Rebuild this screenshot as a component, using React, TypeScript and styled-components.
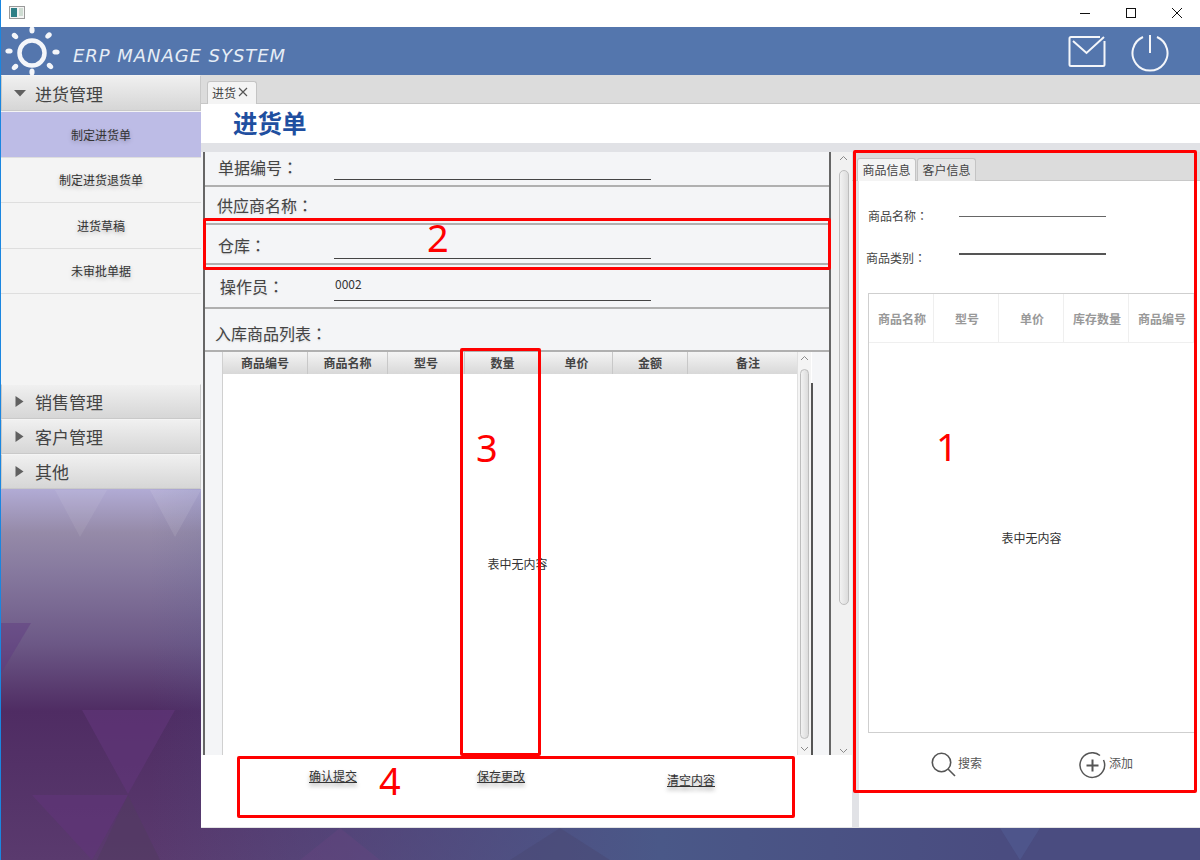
import React from "react";
import styled, { createGlobalStyle } from "styled-components";

const GlobalStyle = createGlobalStyle`
  html, body {
    margin: 0;
    padding: 0;
    background: #fff;
  }
  body {
    font-family: "Noto Sans CJK SC", "Liberation Sans", sans-serif;
    color: #333;
  }
`;

const Window = styled.div`
  position: relative;
  width: 1200px;
  height: 860px;
  box-sizing: border-box;
  border-left: 1px solid #1a86e0;
  overflow: hidden;
  display: flex;
  flex-direction: column;
`;

const Backdrop = styled.svg`
  position: absolute;
  left: -1px;
  top: 0;
  z-index: 0;
`;

const TitleBar = styled.div`
  position: relative;
  z-index: 1;
  height: 27px;
  box-sizing: border-box;
  padding: 0 17px 2px 8px;
  background: #fff;
  display: flex;
  align-items: center;
  justify-content: space-between;
`;

const WindowButtons = styled.div`
  display: flex;
  align-items: center;
  gap: 34px;
`;

const Header = styled.header`
  position: relative;
  z-index: 1;
  height: 48px;
  background: #5476ad;
  display: flex;
  align-items: center;
`;

const Logo = styled.svg`
  flex: none;
`;

const Brand = styled.div`
  margin-left: 7px;
  margin-top: 8px;
  font-family: "DejaVu Sans", sans-serif;
  font-style: italic;
  font-size: 18px;
  letter-spacing: 0.95px;
  color: #e6edf6;
  white-space: nowrap;
`;

const HeaderIcons = styled.div`
  margin-left: auto;
  margin-right: 30px;
  display: flex;
  align-items: center;
  gap: 24px;
`;

const Main = styled.div`
  position: relative;
  z-index: 1;
  flex: 1;
  display: flex;
  align-items: flex-start;
`;

const Sidebar = styled.nav`
  width: 200px;
  flex: none;
  display: flex;
  flex-direction: column;
`;

const PaneHead = styled.div<{ $tall?: boolean }>`
  height: ${(p) => (p.$tall ? 36 : 35)}px;
  box-sizing: border-box;
  background: linear-gradient(#f0f0f0, #d6d6d6);
  border: 1px solid #c9c9c9;
  border-top-color: #f4f4f4;
  display: flex;
  align-items: center;
  gap: 8px;
  padding-left: 12px;
  font-size: 17px;
  color: #444;
`;

const PaneBody = styled.div`
  height: 273px;
  box-sizing: border-box;
  padding-top: 1px;
  background: #f4f4f4;
`;

const NavItem = styled.div<{ $active?: boolean }>`
  height: 45.5px;
  box-sizing: border-box;
  display: flex;
  align-items: center;
  justify-content: center;
  font-size: 12px;
  color: #333;
  text-shadow: 0 2px 4px rgba(0, 0, 0, 0.25);
  background: ${(p) => (p.$active ? "#bdbce6" : "#f4f4f4")};
  border-bottom: 1px solid #dedede;
`;

const Content = styled.section`
  width: 999px;
  height: 753px;
  flex: none;
  background: #fff;
  display: flex;
  flex-direction: column;
  border-bottom: 1px solid #e4e4e4;
  box-sizing: border-box;
`;

const TabStrip = styled.div<{ $inset: number; $height: number }>`
  height: ${(p) => p.$height}px;
  box-sizing: border-box;
  background: #dcdcdc;
  border-bottom: 1px solid #c8c8c8;
  padding-left: ${(p) => p.$inset}px;
  display: flex;
  align-items: flex-end;
  gap: 1px;
  flex: none;
`;

const Tab = styled.div<{ $active?: boolean; $width: number }>`
  width: ${(p) => p.$width}px;
  height: 23px;
  box-sizing: border-box;
  margin-bottom: -1px;
  padding-bottom: 2px;
  background: ${(p) => (p.$active ? "#f4f4f4" : "#e6e6e6")};
  border: 1px solid #c4c4c4;
  border-bottom: none;
  border-radius: 3px 3px 0 0;
  display: flex;
  align-items: center;
  justify-content: center;
  gap: 2px;
  font-size: 12px;
  color: #444;
`;

const ClosableTab = styled(Tab)`
  justify-content: flex-start;
  padding-left: 4px;
`;

const PageTitle = styled.h1`
  margin: 0;
  height: 39px;
  flex: none;
  box-sizing: border-box;
  padding-left: 32px;
  font-size: 24.5px;
  line-height: 38px;
  font-weight: 700;
  color: #1f4fa0;
`;

const Divider = styled.div`
  height: 9px;
  flex: none;
  background: #e1e2e6;
`;

const Work = styled.div`
  flex: 1;
  display: flex;
  min-height: 0;
`;

const LeftPane = styled.div`
  width: 651px;
  flex: none;
  display: flex;
  flex-direction: column;
`;

const FormFrame = styled.div`
  height: 603px;
  flex: none;
  display: flex;
  background: #f4f5f7;
  padding-left: 2px;
`;

const Form = styled.div`
  width: 624px;
  flex: none;
  border-left: 2px solid #666;
  border-right: 2px solid #666;
  display: flex;
  flex-direction: column;
`;

const FormRow = styled.div<{ $height: number; $pad: number; $indent: number }>`
  height: ${(p) => p.$height}px;
  box-sizing: border-box;
  flex: none;
  display: flex;
  align-items: flex-end;
  padding-bottom: ${(p) => p.$pad}px;
  padding-left: ${(p) => p.$indent}px;
  border-bottom: 2px solid #b0b0b0;
`;

const FormLabel = styled.div<{ $width?: number; $lift?: number }>`
  width: ${(p) => (p.$width ? `${p.$width}px` : "auto")};
  flex: none;
  margin-bottom: ${(p) => p.$lift ?? 0}px;
  font-size: 16px;
  line-height: 24px;
  color: #444;
  text-shadow: 0 1px 2px rgba(0, 0, 0, 0.12);
`;

const Colon = styled.span`
  font-family: "Noto Sans CJK TC", sans-serif;
`;

const FormField = styled.div`
  width: 317px;
  height: 28px;
  flex: none;
  box-sizing: border-box;
  padding: 3px 0 0 1px;
  border-bottom: 1px solid #444;
  font-size: 12px;
  line-height: 16px;
  color: #333;
`;

const TableWrap = styled.div`
  flex: 1;
  display: flex;
  padding-left: 17px;
  min-height: 0;
`;

const GridTable = styled.div`
  position: relative;
  width: 590px;
  flex: none;
  background: #fff;
  border-left: 1px solid #d0d0d0;
  box-sizing: border-box;
  display: flex;
  flex-direction: column;
`;

const HeadRow = styled.div`
  display: flex;
  height: 22px;
  flex: none;
  box-sizing: border-box;
`;

const HeadCell = styled.div<{ $width: number }>`
  width: ${(p) => p.$width}px;
  flex: none;
  box-sizing: border-box;
  background: linear-gradient(#f4f4f4, #d8d8d8);
  border-right: 1px solid #c8c8c8;
  display: flex;
  align-items: center;
  justify-content: center;
  padding-bottom: 2px;
  font-size: 12px;
  font-weight: 700;
  color: #444;
`;

const EmptyBody = styled.div<{ $lift?: number }>`
  flex: 1;
  display: flex;
  align-items: center;
  justify-content: center;
  padding-bottom: ${(p) => p.$lift ?? 0}px;
  font-size: 12px;
  color: #333;
`;

const InnerScroll = styled.div`
  position: absolute;
  right: 1px;
  top: 0;
  bottom: 0;
  width: 14px;
  background: #f4f4f4;
  border-left: 1px solid #e0e0e0;
  box-sizing: border-box;
  display: flex;
  flex-direction: column;
  align-items: center;
  justify-content: space-between;
  padding: 3px 0;
`;

const Thumb = styled.div<{ $height: number }>`
  width: 9px;
  height: ${(p) => p.$height}px;
  box-sizing: border-box;
  background: linear-gradient(90deg, #f2f2f2, #dcdcdc);
  border: 1px solid #bdbdbd;
  border-radius: 5px;
`;

const InnerEdge = styled.div`
  position: absolute;
  right: -1px;
  top: 31px;
  bottom: 0;
  width: 2px;
  background: #555;
`;

const OuterScroll = styled.div`
  width: 21px;
  flex: none;
  box-sizing: border-box;
  background: #f1f1f1;
  padding: 3px 3px 1px 7px;
  display: flex;
  flex-direction: column;
  align-items: center;
  justify-content: flex-start;
`;

const OuterThumb = styled(Thumb)`
  margin: 9px 0 auto;
  width: 10px;
`;

const ActionBar = styled.div`
  flex: 1;
  display: grid;
  grid-template-columns: 168px 190px auto;
  align-items: start;
  justify-content: start;
  padding: 13px 0 0 108px;
`;

const LinkButton = styled.div<{ $drop?: number }>`
  margin-top: ${(p) => p.$drop ?? 0}px;
  width: max-content;
  font-size: 12px;
  line-height: 16px;
  color: #333;
  text-decoration: underline;
  text-shadow: 0 3px 4px rgba(0, 0, 0, 0.35);
`;

const RightPane = styled.div`
  flex: 1;
  min-width: 0;
  display: flex;
  flex-direction: column;
`;

const RightBody = styled.div`
  flex: 1;
  margin-left: 7px;
  padding-right: 5px;
  background: #fff;
  position: relative;
  box-sizing: border-box;
  display: flex;
  flex-direction: column;
`;

const RightGutter = styled.div`
  flex: 1;
  display: flex;
  background: #e1e2e6;
  min-height: 0;
`;

const InfoRow = styled.div<{ $top: number; $indent: number }>`
  display: flex;
  align-items: flex-end;
  margin-top: ${(p) => p.$top}px;
  padding-left: ${(p) => p.$indent}px;
`;

const InfoLabel = styled.div<{ $width: number }>`
  width: ${(p) => p.$width}px;
  flex: none;
  font-size: 12px;
  line-height: 16px;
  color: #444;
`;

const InfoLine = styled.div<{ $raise: number; $thick?: boolean }>`
  width: 147px;
  height: ${(p) => (p.$thick ? 2 : 1)}px;
  margin-bottom: ${(p) => p.$raise}px;
  background: ${(p) => (p.$thick ? "#555" : "#666")};
`;

const ProductTable = styled.div`
  margin: 27px 0 0 9px;
  height: 440px;
  flex: none;
  box-sizing: border-box;
  border: 1px solid #cfcfcf;
  display: flex;
  flex-direction: column;
`;

const ProductHead = styled.div`
  display: flex;
  height: 49px;
  flex: none;
  box-sizing: border-box;
  border-bottom: 1px solid #efefef;
`;

const ProductCell = styled.div`
  width: 65px;
  flex: none;
  box-sizing: border-box;
  padding-left: 2px;
  border-right: 1px solid #efefef;
  display: flex;
  align-items: center;
  justify-content: center;
  font-size: 12px;
  font-weight: 700;
  color: #999;
`;

const ToolRow = styled.div`
  display: flex;
  align-items: flex-start;
  padding: 19px 0 0 72px;
`;

const Tool = styled.div<{ $width: number; $gap: number }>`
  width: ${(p) => p.$width}px;
  display: flex;
  align-items: flex-start;
  gap: ${(p) => p.$gap}px;
  font-size: 12px;
  line-height: 22px;
  color: #555;
`;

const Marker = styled.div<{ $x: number; $y: number; $w: number; $h: number }>`
  position: absolute;
  left: ${(p) => p.$x - 1}px;
  top: ${(p) => p.$y}px;
  width: ${(p) => p.$w}px;
  height: ${(p) => p.$h}px;
  box-sizing: border-box;
  border: 3px solid #ff0000;
  border-radius: 2px;
  z-index: 2;
  pointer-events: none;
`;

const MarkerNumber = styled.span<{ $x: number; $y: number }>`
  position: absolute;
  left: ${(p) => p.$x - 1}px;
  top: ${(p) => p.$y}px;
  z-index: 2;
  font-family: "Noto Sans", sans-serif;
  font-size: 38px;
  line-height: 44px;
  color: #ff0000;
`;

const Chevron = ({ up }: { up?: boolean }) => (
  <svg width="9" height="6" viewBox="0 0 9 6">
    <path d={up ? "M1 5 L4.5 1.5 L8 5" : "M1 1 L4.5 4.5 L8 1"} fill="none" stroke="#8a8a8a" strokeWidth="1" />
  </svg>
);

const Arrow = ({ open }: { open?: boolean }) => (
  <svg width="13" height="13" viewBox="0 0 13 13">
    <path d={open ? "M0 3 H12 L6 9.5 Z" : "M1.5 1 L9.5 6.5 L1.5 12 Z"} fill="#606060" />
  </svg>
);

// sun rays: x, y, rotation
const rays = [
  [32, 30, 0],
  [48.5, 35.5, 45],
  [56, 52, 90],
  [50, 66, 135],
  [32, 72, 0],
  [15, 67, 45],
  [9, 51, 90],
  [15, 36, 135],
];

const BackdropArt = () => (
  <Backdrop width="1200" height="860" viewBox="0 0 1200 860">
    <defs>
      <linearGradient id="bgV" x1="0" y1="488" x2="0" y2="860" gradientUnits="userSpaceOnUse">
        <stop offset="0" stopColor="#b2acd6" />
        <stop offset="0.12" stopColor="#958aa8" />
        <stop offset="0.22" stopColor="#877a9f" />
        <stop offset="0.42" stopColor="#6c5886" />
        <stop offset="0.6" stopColor="#4f2c63" />
        <stop offset="1" stopColor="#5a3a6e" />
      </linearGradient>
      <linearGradient id="bgH" x1="150" y1="0" x2="1000" y2="0" gradientUnits="userSpaceOnUse">
        <stop offset="0" stopColor="#4c5a90" stopOpacity="0" />
        <stop offset="0.6" stopColor="#4a5888" stopOpacity="1" />
        <stop offset="1" stopColor="#4a4c80" stopOpacity="1" />
      </linearGradient>
    </defs>
    <rect width="1200" height="860" fill="url(#bgV)" />
    <rect width="1200" height="860" fill="url(#bgH)" />
    <polygon points="55,490 107,490 80,537" fill="#ffffff" opacity="0.07" />
    <polygon points="150,490 201,490 175,537" fill="#ffffff" opacity="0.09" />
    <polygon points="0,623 31,623 0,675" fill="#603a80" opacity="0.45" />
    <polygon points="82,710 175,710 128,794" fill="#5f3578" opacity="0.7" />
    <polygon points="32,795 128,795 92,860" fill="#5f3578" opacity="0.7" />
    <polygon points="128,795 97,860 160,860" fill="#523a62" opacity="0.7" />
    <polygon points="300,860 340,828 380,860" fill="#6a4580" opacity="0.35" />
    <polygon points="560,828 610,860 510,860" fill="#4a4870" opacity="0.45" />
    <polygon points="1000,828 1040,828 1020,860" fill="#55649a" opacity="0.4" />
  </Backdrop>
);

const listColumns: [string, number][] = [
  ["商品编号", 85],
  ["商品名称", 80],
  ["型号", 77],
  ["数量", 76],
  ["单价", 72],
  ["金额", 75],
  ["备注", 121],
];

const productColumns = ["商品名称", "型号", "单价", "库存数量", "商品编号"];

export default function App() {
  return (
    <>
      <GlobalStyle />
      <Window>
        <BackdropArt />

        <TitleBar>
          <svg width="16" height="13" viewBox="0 0 16 13">
            <rect x="0.5" y="0.5" width="15" height="12" fill="#f4f4f4" stroke="#9a9a9a" />
            <rect x="2" y="2" width="6" height="9" fill="#2f7f86" />
            <path d="M10 3 H14 M10 5 H14 M10 7 H14 M10 9 H14" stroke="#a8c4b0" strokeWidth="1" />
          </svg>
          <WindowButtons>
            <svg width="12" height="12" viewBox="0 0 12 12">
              <path d="M1 6.5 H11" stroke="#111" strokeWidth="1" />
            </svg>
            <svg width="12" height="12" viewBox="0 0 12 12">
              <rect x="1.5" y="1.5" width="9" height="9" fill="none" stroke="#111" strokeWidth="1" />
            </svg>
            <svg width="12" height="12" viewBox="0 0 12 12">
              <path d="M1 1 L11 11 M11 1 L1 11" stroke="#111" strokeWidth="1" />
            </svg>
          </WindowButtons>
        </TitleBar>

        <Header>
          <Logo width="65" height="48" viewBox="1 27 65 48">
            <circle cx="32" cy="53" r="12.5" fill="none" stroke="#f4f6fa" strokeWidth="4.5" />
            {rays.map(([x, y, angle]) => (
              <ellipse
                key={`${x}-${y}`}
                cx={x}
                cy={y}
                rx="2.6"
                ry="3.6"
                fill="#f4f6fa"
                transform={`rotate(${angle} ${x} ${y})`}
              />
            ))}
          </Logo>
          <Brand>ERP MANAGE SYSTEM</Brand>
          <HeaderIcons>
            <svg width="38" height="32" viewBox="0 0 38 32">
              <path
                d="M32 2 H3 Q1.5 2 1.5 3.5 V29.5 Q1.5 31 3 31 H35 Q36.5 31 36.5 29.5 V6"
                fill="none"
                stroke="#f4f6fa"
                strokeWidth="2"
              />
              <path d="M5 6 L18.5 18 L36 2" fill="none" stroke="#f4f6fa" strokeWidth="2" />
            </svg>
            <svg width="40" height="44" viewBox="0 0 40 44">
              <path d="M13 8 A17.5 17.5 0 1 0 27 8" fill="none" stroke="#f4f6fa" strokeWidth="2" />
              <path d="M20 6 V24" stroke="#f4f6fa" strokeWidth="2" />
            </svg>
          </HeaderIcons>
        </Header>

        <Main>
          <Sidebar>
            <PaneHead $tall>
              <Arrow open />
              进货管理
            </PaneHead>
            <PaneBody>
              <NavItem $active>制定进货单</NavItem>
              <NavItem>制定进货退货单</NavItem>
              <NavItem>进货草稿</NavItem>
              <NavItem>未审批单据</NavItem>
            </PaneBody>
            <PaneHead>
              <Arrow />
              销售管理
            </PaneHead>
            <PaneHead>
              <Arrow />
              客户管理
            </PaneHead>
            <PaneHead>
              <Arrow />
              其他
            </PaneHead>
          </Sidebar>

          <Content>
            <TabStrip $inset={6} $height={29}>
              <ClosableTab $active $width={50}>
                进货
                <svg width="10" height="10" viewBox="0 0 10 10">
                  <path d="M1 1 L9 9 M9 1 L1 9" stroke="#555" strokeWidth="1.2" />
                </svg>
              </ClosableTab>
            </TabStrip>
            <PageTitle>进货单</PageTitle>
            <Divider />
            <Work>
              <LeftPane>
                <FormFrame>
                  <Form>
                    <FormRow $height={35} $pad={5} $indent={13}>
                      <FormLabel $width={116} $lift={1}>
                        单据编号<Colon>：</Colon>
                      </FormLabel>
                      <FormField />
                    </FormRow>
                    <FormRow $height={38} $pad={3} $indent={12}>
                      <FormLabel $width={117} $lift={3}>
                        供应商名称<Colon>：</Colon>
                      </FormLabel>
                      <FormField />
                    </FormRow>
                    <FormRow $height={40} $pad={4} $indent={13}>
                      <FormLabel $width={116} $lift={2}>
                        仓库<Colon>：</Colon>
                      </FormLabel>
                      <FormField />
                    </FormRow>
                    <FormRow $height={44} $pad={6} $indent={15}>
                      <FormLabel $width={114} $lift={3}>
                        操作员<Colon>：</Colon>
                      </FormLabel>
                      <FormField>0002</FormField>
                    </FormRow>
                    <FormRow $height={43} $pad={5} $indent={10}>
                      <FormLabel>
                        入库商品列表<Colon>：</Colon>
                      </FormLabel>
                    </FormRow>
                    <TableWrap>
                      <GridTable>
                        <HeadRow>
                          {listColumns.map(([name, width]) => (
                            <HeadCell key={name} $width={width}>
                              {name}
                            </HeadCell>
                          ))}
                        </HeadRow>
                        <EmptyBody $lift={2}>表中无内容</EmptyBody>
                        <InnerScroll>
                          <Chevron up />
                          <Thumb $height={370} />
                          <Chevron />
                        </InnerScroll>
                        <InnerEdge />
                      </GridTable>
                    </TableWrap>
                  </Form>
                  <OuterScroll>
                    <Chevron up />
                    <OuterThumb $height={435} />
                    <Chevron />
                  </OuterScroll>
                </FormFrame>
                <ActionBar>
                  <LinkButton>确认提交</LinkButton>
                  <LinkButton>保存更改</LinkButton>
                  <LinkButton $drop={4}>清空内容</LinkButton>
                </ActionBar>
              </LeftPane>

              <RightPane>
                <TabStrip $inset={5} $height={29}>
                  <Tab $active $width={59}>
                    商品信息
                  </Tab>
                  <Tab $width={59}>客户信息</Tab>
                </TabStrip>
                <RightGutter>
                  <RightBody>
                    <InfoRow $top={27} $indent={9}>
                      <InfoLabel $width={91}>
                        商品名称<Colon>：</Colon>
                      </InfoLabel>
                      <InfoLine $raise={7} />
                    </InfoRow>
                    <InfoRow $top={26} $indent={7}>
                      <InfoLabel $width={93}>
                        商品类别<Colon>：</Colon>
                      </InfoLabel>
                      <InfoLine $raise={11} $thick />
                    </InfoRow>
                    <ProductTable>
                      <ProductHead>
                        {productColumns.map((name) => (
                          <ProductCell key={name}>{name}</ProductCell>
                        ))}
                      </ProductHead>
                      <EmptyBody>表中无内容</EmptyBody>
                    </ProductTable>
                    <ToolRow>
                      <Tool $width={148} $gap={2}>
                        <svg width="25" height="25" viewBox="0 0 25 25">
                          <circle cx="10.5" cy="10.5" r="9.2" fill="none" stroke="#555" strokeWidth="1.6" />
                          <path d="M17 17 L24 24" stroke="#555" strokeWidth="1.6" />
                        </svg>
                        搜索
                      </Tool>
                      <Tool $width={70} $gap={3}>
                        <svg width="27" height="27" viewBox="0 0 27 27">
                          <path d="M21 3.5 A12.3 12.3 0 1 0 24.5 8" fill="none" stroke="#555" strokeWidth="1.5" />
                          <path d="M7.5 13.5 H19.5 M13.5 7.5 V19.5" stroke="#555" strokeWidth="2" />
                        </svg>
                        添加
                      </Tool>
                    </ToolRow>
                  </RightBody>
                </RightGutter>
              </RightPane>
            </Work>
          </Content>
        </Main>

        <Marker $x={853} $y={150} $w={344} $h={643} />
        <Marker $x={203} $y={218} $w={628} $h={52} />
        <Marker $x={460} $y={348} $w={81} $h={408} />
        <Marker $x={237} $y={756} $w={558} $h={62} />
        <MarkerNumber $x={936} $y={424}>1</MarkerNumber>
        <MarkerNumber $x={427} $y={215}>2</MarkerNumber>
        <MarkerNumber $x={476} $y={425}>3</MarkerNumber>
        <MarkerNumber $x={379} $y={758}>4</MarkerNumber>
      </Window>
    </>
  );
}
